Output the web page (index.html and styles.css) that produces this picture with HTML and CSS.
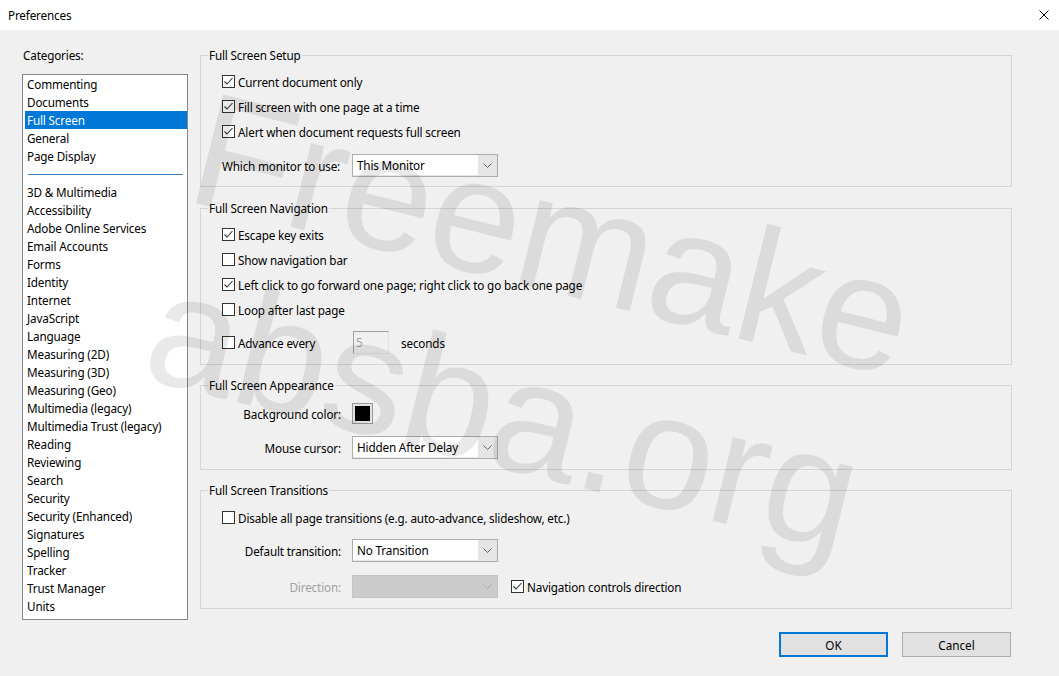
FILE: index.html
```html
<!DOCTYPE html>
<html lang="en">
<head>
  <meta charset="UTF-8" />
  <title>Preferences</title>
  <link rel="stylesheet" href="styles.css">
</head>
<body>
  <div class="window">
    <div class="titlebar">
      <span class="title">Preferences</span>
      <svg class="close" width="10" height="10" viewBox="0 0 10 10"><path d="M0.5 0.5L9.5 9.5M9.5 0.5L0.5 9.5" stroke="#000" stroke-width="1" fill="none"/></svg>
    </div>

    <div class="main">
      <div class="sidebar">
        <div class="cat-label">Categories:</div>
        <ul class="cat-list">
          <li>Commenting</li>
          <li>Documents</li>
          <li class="selected">Full Screen</li>
          <li>General</li>
          <li>Page Display</li>
          <li class="sep"><span></span></li>
          <li>3D &amp; Multimedia</li>
          <li>Accessibility</li>
          <li>Adobe Online Services</li>
          <li>Email Accounts</li>
          <li>Forms</li>
          <li>Identity</li>
          <li>Internet</li>
          <li>JavaScript</li>
          <li>Language</li>
          <li>Measuring (2D)</li>
          <li>Measuring (3D)</li>
          <li>Measuring (Geo)</li>
          <li>Multimedia (legacy)</li>
          <li>Multimedia Trust (legacy)</li>
          <li>Reading</li>
          <li>Reviewing</li>
          <li>Search</li>
          <li>Security</li>
          <li>Security (Enhanced)</li>
          <li>Signatures</li>
          <li>Spelling</li>
          <li>Tracker</li>
          <li>Trust Manager</li>
          <li>Units</li>
        </ul>
      </div>

      <div class="content">
        <fieldset class="group setup">
          <legend>Full Screen Setup</legend>
          <div class="check"><span class="box"><svg width="11" height="11" viewBox="0 0 11 11"><polyline points="1.5,5.5 4,8 9.5,2" /></svg></span>Current document only</div>
          <div class="check"><span class="box"><svg width="11" height="11" viewBox="0 0 11 11"><polyline points="1.5,5.5 4,8 9.5,2" /></svg></span>Fill screen with one page at a time</div>
          <div class="check"><span class="box"><svg width="11" height="11" viewBox="0 0 11 11"><polyline points="1.5,5.5 4,8 9.5,2" /></svg></span>Alert when document requests full screen</div>
          <div class="field gap-top">
            <span class="label left">Which monitor to use:</span>
            <div class="select"><span class="value">This Monitor</span><span class="arrow"><svg width="9" height="5" viewBox="0 0 9 5"><polyline points="0.5,0.5 4.5,4.5 8.5,0.5" /></svg></span></div>
          </div>
        </fieldset>

        <fieldset class="group navigation">
          <legend>Full Screen Navigation</legend>
          <div class="check"><span class="box"><svg width="11" height="11" viewBox="0 0 11 11"><polyline points="1.5,5.5 4,8 9.5,2" /></svg></span>Escape key exits</div>
          <div class="check"><span class="box"></span>Show navigation bar</div>
          <div class="check"><span class="box"><svg width="11" height="11" viewBox="0 0 11 11"><polyline points="1.5,5.5 4,8 9.5,2" /></svg></span>Left click to go forward one page; right click to go back one page</div>
          <div class="check"><span class="box"></span>Loop after last page</div>
          <div class="advance">
            <div class="check advance-check"><span class="box"></span>Advance every</div>
            <span class="spin">5</span>
            <span class="unit">seconds</span>
          </div>
        </fieldset>

        <fieldset class="group appearance">
          <legend>Full Screen Appearance</legend>
          <div class="field">
            <span class="label">Background color:</span>
            <span class="swatch"><span class="fill"></span></span>
          </div>
          <div class="field gap-top">
            <span class="label">Mouse cursor:</span>
            <div class="select"><span class="value">Hidden After Delay</span><span class="arrow"><svg width="9" height="5" viewBox="0 0 9 5"><polyline points="0.5,0.5 4.5,4.5 8.5,0.5" /></svg></span></div>
          </div>
        </fieldset>

        <fieldset class="group transitions">
          <legend>Full Screen Transitions</legend>
          <div class="check"><span class="box"></span>Disable all page transitions (e.g. auto-advance, slideshow, etc.)</div>
          <div class="field gap-top">
            <span class="label">Default transition:</span>
            <div class="select"><span class="value">No Transition</span><span class="arrow"><svg width="9" height="5" viewBox="0 0 9 5"><polyline points="0.5,0.5 4.5,4.5 8.5,0.5" /></svg></span></div>
          </div>
          <div class="field gap-wide">
            <span class="label disabled">Direction:</span>
            <div class="select disabled"><span class="value"></span><span class="arrow"><svg width="9" height="5" viewBox="0 0 9 5"><polyline points="0.5,0.5 4.5,4.5 8.5,0.5" /></svg></span></div>
            <div class="check nav-dir"><span class="box"><svg width="11" height="11" viewBox="0 0 11 11"><polyline points="1.5,5.5 4,8 9.5,2" /></svg></span>Navigation controls direction</div>
          </div>
        </fieldset>

        <div class="buttons">
          <button class="btn default">OK</button>
          <button class="btn">Cancel</button>
        </div>
      </div>
    </div>

    <div class="watermark">Freemake<br>absba.org</div>
  </div>
</body>
</html>
```

FILE: styles.css
```css
/* Preferences dialog, Windows look */
html, body {
  margin: 0;
  padding: 0;
}
body {
  font-family: "Noto Sans", "Open Sans", Arial, sans-serif;
  font-size: 11.7px;
  letter-spacing: -0.15px;
  color: #000;
  background-color: #f0f0f0;
}
.window {
  position: relative;
  width: 1059px;
  height: 676px;
  overflow: hidden;
}
.titlebar {
  height: 30px;
  background-color: #fff;
  display: flex;
  align-items: center;
  justify-content: space-between;
  padding: 0 10px 0 8px;
}
.main {
  display: flex;
  gap: 12px;
  padding: 17px 0 0 22px;
}

/* categories */
.sidebar {
  width: 166px;
  flex: none;
}
.cat-label {
  height: 16px;
  line-height: 16px;
  padding-left: 1px;
  margin-bottom: 11px;
}
.cat-list {
  list-style: none;
  margin: 0;
  padding: 0;
  height: 546px;
  box-sizing: border-box;
  border: 1px solid #828790;
  background-color: #fff;
}
.cat-list li {
  height: 18px;
  line-height: 18px;
  margin-left: 2px;
  padding-left: 2px;
  white-space: nowrap;
}
.cat-list li:first-child {
  margin-top: 1px;
  height: 17px;
  line-height: 16px;
}
.cat-list li.selected {
  background-color: #0078d7;
  color: #fff;
}
.cat-list li.sep {
  display: flex;
  align-items: center;
  margin-left: 5px;
  margin-right: 4px;
  padding-left: 0;
}
.cat-list li.sep span {
  flex: 1;
  border-top: 1px solid #3c7fc0;
}

/* group boxes */
.content {
  width: 812px;
  flex: none;
}
.group {
  margin: 0 0 12px 0;
  min-width: 0;
  border: 1px solid #d5d5d5;
  padding: 7px 0 9px 21px;
}
.group legend {
  padding: 0 1px;
  margin-left: -14px;
  height: 16px;
  line-height: 16px;
}
.setup {
  margin-bottom: 13px;
  padding-top: 6px;
  padding-bottom: 8px;
}
.setup .gap-top {
  margin-top: 9px;
}
.navigation {
  padding-top: 6px;
  padding-bottom: 10px;
}
.appearance {
  padding-top: 8px;
}

.check {
  display: flex;
  align-items: center;
  height: 25px;
  white-space: nowrap;
}
.box {
  width: 13px;
  height: 13px;
  box-sizing: border-box;
  border: 1px solid #333;
  background-color: #fff;
  margin-right: 3px;
  display: flex;
  align-items: center;
  justify-content: center;
  flex: none;
}
.box svg polyline {
  fill: none;
  stroke: #333;
  stroke-width: 1.1;
}

.field {
  display: flex;
  align-items: center;
  height: 25px;
}
.gap-top {
  margin-top: 8px;
}
.appearance .gap-top {
  margin-top: 9px;
}
.gap-wide {
  margin-top: 11px;
}
.label {
  width: 130px;
  box-sizing: border-box;
  padding-right: 11px;
  text-align: right;
  flex: none;
  white-space: nowrap;
}
.label.left {
  text-align: left;
}
.label.disabled {
  color: #a0a0a0;
}

.select {
  width: 146px;
  height: 23px;
  box-sizing: border-box;
  border: 1px solid #adadad;
  background-color: #e5e5e5;
  display: flex;
}
.select .value {
  width: 121px;
  padding-left: 4px;
  background-color: #fff;
  line-height: 20px;
  margin-bottom: 1px;
}
.select .arrow {
  flex: 1;
  display: flex;
  align-items: center;
  justify-content: center;
}
.select .arrow polyline {
  fill: none;
  stroke: #606060;
  stroke-width: 1;
}
.select.disabled {
  background-color: #cccccc;
  border-color: #c4c4c4;
}
.select.disabled .value {
  background-color: transparent;
}
.select.disabled .arrow polyline {
  stroke: #a8a8a8;
}
.nav-dir {
  margin-left: 13px;
}

.advance {
  display: flex;
  align-items: center;
  height: 23px;
  margin-top: 9px;
}
.advance-check {
  width: 131px;
}
.spin {
  width: 36px;
  height: 23px;
  box-sizing: border-box;
  border: 1px solid;
  border-color: #a0a0a0 #e3e3e3 #e3e3e3 #a0a0a0;
  background-color: #f0f0f0;
  color: #a0a0a0;
  padding-left: 2px;
  line-height: 20px;
}
.unit {
  margin-left: 12px;
}

.swatch {
  width: 21px;
  height: 21px;
  box-sizing: border-box;
  border: 1px solid #9a9a9a;
  background-color: #e1e1e1;
  padding: 2px;
}
.swatch .fill {
  display: block;
  width: 100%;
  height: 100%;
  background-color: #000;
}

/* buttons */
.buttons {
  display: flex;
  justify-content: flex-end;
  gap: 14px;
  margin-top: 23px;
  padding-right: 1px;
}
.btn {
  width: 109px;
  height: 25px;
  font: inherit;
  color: #000;
  background-color: #e1e1e1;
  border: 1px solid #adadad;
  padding: 0;
}
.btn.default {
  border: 2px solid #0078d7;
}

/* watermark over the dialog */
.watermark {
  position: absolute;
  left: 183px;
  top: 52px;
  font-family: "Liberation Sans", Arial, sans-serif;
  font-size: 163px;
  letter-spacing: 0;
  line-height: 183px;
  color: rgba(0, 0, 0, 0.085);
  white-space: nowrap;
  transform-origin: 0 148px;
  transform: rotate(14deg);
  pointer-events: none;
}
```
